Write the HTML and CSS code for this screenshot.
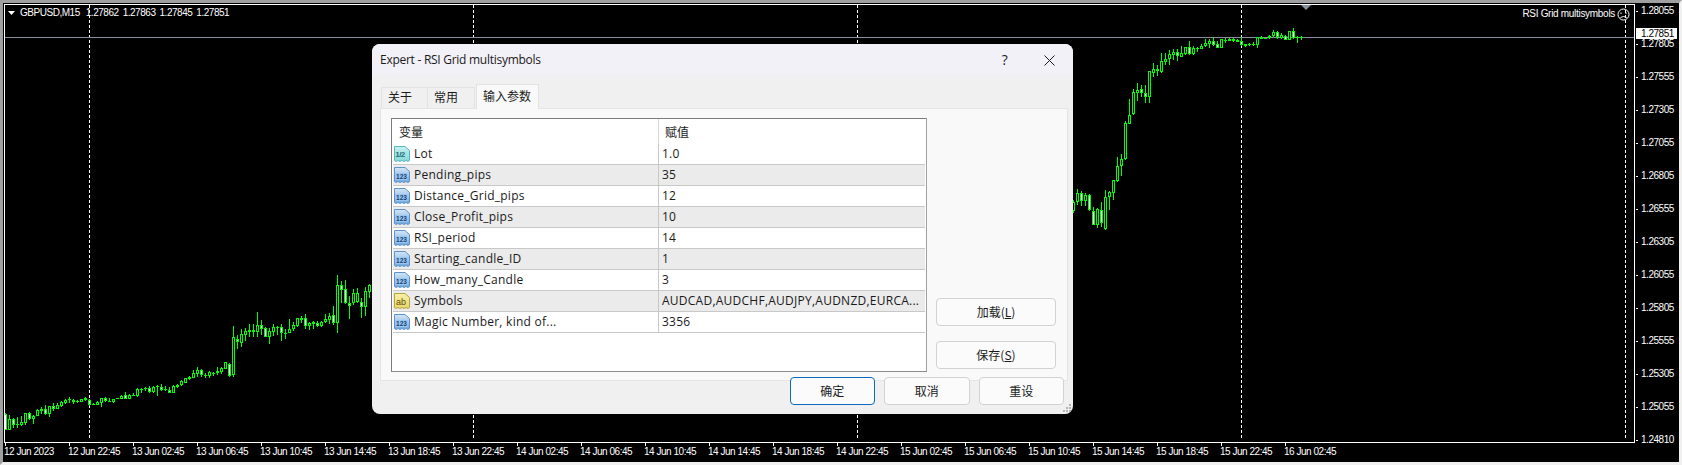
FILE: index.html
```html
<!DOCTYPE html>
<html lang="zh">
<head>
<meta charset="utf-8">
<title>GBPUSD,M15 - RSI Grid multisymbols</title>
<link rel="stylesheet" href="styles.css">
</head>
<body>
<svg class="defs" aria-hidden="true">
  <defs>
    <linearGradient id="gBlue" x1="0" y1="0" x2="0" y2="1"><stop offset="0" stop-color="#d4e6f8"/><stop offset="1" stop-color="#6ea6dc"/></linearGradient>
    <linearGradient id="gTeal" x1="0" y1="0" x2="0" y2="1"><stop offset="0" stop-color="#c8f0f0"/><stop offset="1" stop-color="#86d6d8"/></linearGradient>
    <linearGradient id="gYellow" x1="0" y1="0" x2="0" y2="1"><stop offset="0" stop-color="#f8f0a8"/><stop offset="1" stop-color="#e8d670"/></linearGradient>
    <symbol id="ico-int" viewBox="0 0 16 16">
      <path d="M.5 .5H11L15.5 4.5V14.5L14 15.5 12 14.5 10 15.5 8 14.5 6 15.5 4 14.5 2 15.5 .5 14.5Z" fill="url(#gBlue)" stroke="#5c93cc"/>
      <rect x="1.5" y="6" width="12" height="7" fill="#9cc6ee"/>
      <text x="7.5" y="12" class="ico-t ico-t-int">123</text>
    </symbol>
    <symbol id="ico-dbl" viewBox="0 0 16 16">
      <path d="M.5 .5H11L15.5 4.5V14.5L14 15.5 12 14.5 10 15.5 8 14.5 6 15.5 4 14.5 2 15.5 .5 14.5Z" fill="url(#gTeal)" stroke="#58b6bf"/>
      <text x="6" y="10.5" class="ico-t ico-t-dbl">1/2</text>
    </symbol>
    <symbol id="ico-str" viewBox="0 0 16 16">
      <path d="M.5 .5H11L15.5 4.5V14.5L14 15.5 12 14.5 10 15.5 8 14.5 6 15.5 4 14.5 2 15.5 .5 14.5Z" fill="url(#gYellow)" stroke="#b5a23c"/>
      <text x="7" y="12" class="ico-t ico-t-str">ab</text>
    </symbol>
  </defs>
</svg>

<main class="terminal">
  <section class="plot">
    <svg class="chart" viewBox="5 5 1629 437" aria-hidden="true">
      <path id="grid" class="grid" d=""/>
      <rect class="bid" x="5" y="37" width="1629" height="1"/>
      <path id="wicks" class="candle" d=""/>
      <path id="bear" class="bear" d=""/>
      <path id="bull" class="bull" d=""/>
      <path class="marker" d="M1301 5H1311L1306 10Z"/>
      <path class="menu-arrow" d="M8 11H15L11.5 15Z"/>
    </svg>
    <div class="legend">
      <span>GBPUSD,M15</span><span>1.27862</span><span>1.27863</span><span>1.27845</span><span>1.27851</span>
    </div>
    <div class="ea-name">
      <span>RSI Grid multisymbols</span>
      <svg class="smiley" viewBox="0 0 13 13" aria-hidden="true">
        <circle cx="6.5" cy="6.5" r="5.5"/>
        <path d="M4 4.5V6M9 4.5V6M3.5 9.5Q6.5 7.5 9.5 9.5"/>
      </svg>
    </div>
  </section>

  <aside class="prices">
    <div class="price">1.28055</div>
    <div class="price">1.27805</div>
    <div class="price">1.27555</div>
    <div class="price">1.27305</div>
    <div class="price">1.27055</div>
    <div class="price">1.26805</div>
    <div class="price">1.26555</div>
    <div class="price">1.26305</div>
    <div class="price">1.26055</div>
    <div class="price">1.25805</div>
    <div class="price">1.25555</div>
    <div class="price">1.25305</div>
    <div class="price">1.25055</div>
    <div class="price">1.24810</div>
    <div class="price-tag">1.27851</div>
  </aside>

  <footer class="times">
    <div class="time">12 Jun 2023</div>
    <div class="time">12 Jun 22:45</div>
    <div class="time">13 Jun 02:45</div>
    <div class="time">13 Jun 06:45</div>
    <div class="time">13 Jun 10:45</div>
    <div class="time">13 Jun 14:45</div>
    <div class="time">13 Jun 18:45</div>
    <div class="time">13 Jun 22:45</div>
    <div class="time">14 Jun 02:45</div>
    <div class="time">14 Jun 06:45</div>
    <div class="time">14 Jun 10:45</div>
    <div class="time">14 Jun 14:45</div>
    <div class="time">14 Jun 18:45</div>
    <div class="time">14 Jun 22:45</div>
    <div class="time">15 Jun 02:45</div>
    <div class="time">15 Jun 06:45</div>
    <div class="time">15 Jun 10:45</div>
    <div class="time">15 Jun 14:45</div>
    <div class="time">15 Jun 18:45</div>
    <div class="time">15 Jun 22:45</div>
    <div class="time">16 Jun 02:45</div>
  </footer>

  <div class="dialog" role="dialog">
    <header class="titlebar">
      <span class="title">Expert - RSI Grid multisymbols</span>
      <span class="help">?</span>
      <svg class="close" viewBox="0 0 11 11" aria-hidden="true"><path d="M.5 .5L10.5 10.5M10.5 .5L.5 10.5"/></svg>
    </header>
    <nav class="tabs">
      <div class="tab">关于</div>
      <div class="tab">常用</div>
      <div class="tab tab-active">输入参数</div>
    </nav>
    <div class="panel">
      <div class="params">
        <div class="params-head"><div class="head-var">变量</div><div class="head-val">赋值</div></div>
        <div class="row"><div class="cell-name"><svg class="ico"><use href="#ico-dbl"/></svg>Lot</div><div class="cell-val">1.0</div></div>
        <div class="row alt"><div class="cell-name"><svg class="ico"><use href="#ico-int"/></svg>Pending_pips</div><div class="cell-val">35</div></div>
        <div class="row"><div class="cell-name"><svg class="ico"><use href="#ico-int"/></svg>Distance_Grid_pips</div><div class="cell-val">12</div></div>
        <div class="row alt"><div class="cell-name"><svg class="ico"><use href="#ico-int"/></svg>Close_Profit_pips</div><div class="cell-val">10</div></div>
        <div class="row"><div class="cell-name"><svg class="ico"><use href="#ico-int"/></svg>RSI_period</div><div class="cell-val">14</div></div>
        <div class="row alt"><div class="cell-name"><svg class="ico"><use href="#ico-int"/></svg>Starting_candle_ID</div><div class="cell-val">1</div></div>
        <div class="row"><div class="cell-name"><svg class="ico"><use href="#ico-int"/></svg>How_many_Candle</div><div class="cell-val">3</div></div>
        <div class="row alt"><div class="cell-name"><svg class="ico"><use href="#ico-str"/></svg>Symbols</div><div class="cell-val">AUDCAD,AUDCHF,AUDJPY,AUDNZD,EURCA...</div></div>
        <div class="row"><div class="cell-name"><svg class="ico"><use href="#ico-int"/></svg>Magic Number, kind of...</div><div class="cell-val">3356</div></div>
      </div>
      <div class="side-buttons">
        <button class="btn btn-side">加载(<u>L</u>)</button>
        <button class="btn btn-side">保存(<u>S</u>)</button>
      </div>
    </div>
    <div class="actions">
      <button class="btn btn-main btn-default">确定</button>
      <button class="btn btn-main">取消</button>
      <button class="btn btn-main">重设</button>
    </div>
    <svg class="grip" viewBox="0 0 8 8" aria-hidden="true"><path d="M6 0h2v2H6zM3 3h2v2H3zM6 3h2v2H6zM0 6h2v2H0zM3 6h2v2H3zM6 6h2v2H6z"/></svg>
  </div>
</main>
<script src="chart.js"></script>
</body>
</html>
```

FILE: styles.css
```css
* { box-sizing: border-box; }
html, body { margin: 0; padding: 0; background: #000; }
.defs { position: absolute; width: 0; height: 0; }

.terminal {
  position: relative;
  width: 1682px;
  height: 465px;
  overflow: hidden;
  background: #000;
  color: #fff;
  border-style: solid;
  border-width: 3px;
  border-color: #a0a0a0 #f0f0f0 #f0f0f0 #a0a0a0;
  padding: 1px 0 0 1px;
  display: grid;
  grid-template-columns: 1631px 44px;
  grid-template-rows: 439px 19px;
  font: 10px/12px "Liberation Sans", Arial, sans-serif;
  letter-spacing: -.47px;
}

.plot {
  position: relative;
  border: 1px solid #fff;
}
.chart { display: block; width: 1629px; height: 437px; shape-rendering: crispEdges; }
.grid { fill: none; stroke: #fff; stroke-width: 1; stroke-dasharray: 3 2; }
.bid { fill: #87919b; }
.candle { fill: #00ff00; }
.bear { fill: #fff; }
.bull { fill: #000; }
.marker { fill: #87919b; shape-rendering: auto; }
.menu-arrow { fill: #fff; shape-rendering: auto; }

.legend {
  position: absolute;
  left: 15px;
  top: 2px;
  display: flex;
  gap: 4px;
  white-space: nowrap;
}
.legend span:first-child { margin-right: 2px; }
.ea-name {
  position: absolute;
  right: 4px;
  top: 2px;
  display: flex;
  align-items: center;
  gap: 2px;
  white-space: nowrap;
  letter-spacing: -.3px;
}
.smiley { width: 13px; height: 13px; margin-top: 1px; fill: none; stroke: #fff; stroke-width: 1; }

.prices {
  position: relative;
  display: flex;
  flex-direction: column;
  gap: 21px;
  padding-top: 1px;
}
.price { display: flex; align-items: center; gap: 3px; height: 12px; }
.price::before { content: ""; width: 2px; height: 1px; background: #fff; margin-left: 1px; }
.price-tag {
  position: absolute;
  left: 1px;
  top: 24px;
  width: 41px;
  height: 11px;
  background: #fff;
  color: #000;
  line-height: 11px;
  padding-left: 5px;
}

.times {
  grid-column: 1 / 3;
  display: flex;
  padding: 3px 0 0 0;
}
.time { position: relative; flex: 0 0 64px; white-space: nowrap; }
.time::before { content: ""; position: absolute; left: 1px; top: -3px; width: 1px; height: 3px; background: #fff; }

.dialog {
  position: absolute;
  left: 369px;
  top: 41px;
  width: 701px;
  height: 370px;
  background: #f0f0f0;
  border-radius: 8px;
  color: #1a1a1a;
  display: flex;
  flex-direction: column;
  overflow: hidden;
  font: 12px/16px "Open Sans", "Noto Sans CJK SC", sans-serif;
  letter-spacing: .25px;
}
.titlebar {
  flex: 0 0 31px;
  display: flex;
  align-items: center;
  background: #f3f1f8;
  padding: 1px 0 0 8px;
}
.title { flex: 1; letter-spacing: -.27px; }
.help { width: 16px; text-align: center; font-size: 14px; margin-right: 31px; }
.close { width: 11px; height: 11px; margin-right: 18px; fill: none; stroke: #1a1a1a; stroke-width: 1; }

.tabs {
  display: flex;
  align-items: flex-end;
  height: 24px;
  margin: 9px 0 0 9px;
  font-family: "Noto Sans CJK SC", sans-serif;
  letter-spacing: 0;
  position: relative;
  z-index: 1;
}
.tab {
  width: 47px;
  height: 21px;
  padding-left: 6px;
  line-height: 18px;
  background: #f0f0f0;
  border: 1px solid #e3e3e3;
  border-bottom: 0;
  border-left-width: 0;
}
.tab:first-child { border-left-width: 1px; }
.tab-active {
  width: 63px;
  height: 25px;
  line-height: 21px;
  background: #f9f9f9;
  border-left-width: 1px;
  margin-bottom: -1px;
  margin-left: 1px;
}

.panel {
  flex: 0 0 273px;
  margin: 0 5px 0 8px;
  background: #f9f9f9;
  border: 1px solid #e5e5e5;
  padding: 9px 8px 8px 10px;
  display: flex;
  gap: 9px;
}
.params {
  width: 536px;
  height: 254px;
  background: #fff;
  border: 1px solid #828282;
  border-color: #7c7c7c #a0a0a0 #8c8c8c #7c7c7c;
  padding-left: 1px;
}
.params-head {
  display: grid;
  grid-template-columns: 265px 1fr;
  height: 25px;
  line-height: 25px;
  font-family: "Noto Sans CJK SC", sans-serif;
  letter-spacing: 0;
}
.head-var { padding-left: 6px; }
.head-val { border-left: 1px solid #d8d8d8; padding-left: 6px; }
.row {
  display: grid;
  grid-template-columns: 265px 1fr;
  height: 21px;
  width: 532px;
  border-bottom: 1px solid #c8c8c8;
  line-height: 20px;
}
.alt { background: #ebebeb; }
.cell-name {
  display: flex;
  align-items: center;
  gap: 4px;
  padding-left: 1px;
  white-space: nowrap;
}
.cell-val {
  border-left: 1px solid #c8c8c8;
  padding-left: 3px;
  white-space: nowrap;
  overflow: hidden;
}
.ico { flex: 0 0 16px; width: 16px; height: 16px; }
.ico-t { text-anchor: middle; font-family: "Liberation Sans", sans-serif; font-weight: 700; letter-spacing: 0; }
.ico-t-int { font-size: 6.5px; fill: #16427a; }
.ico-t-dbl { font-size: 8px; fill: #1f6f78; letter-spacing: -.5px; }
.ico-t-str { font-size: 9px; fill: #5c5000; font-weight: 400; }

.side-buttons {
  width: 120px;
  display: flex;
  flex-direction: column;
  justify-content: flex-end;
  gap: 15px;
  padding-bottom: 3px;
}
.btn {
  font: 12px/16px "Noto Sans CJK SC", sans-serif;
  color: #1a1a1a;
  background: #fbfbfb;
  border: 1px solid #d2d2d2;
  border-radius: 4px;
  padding: 0;
}
.btn-side { height: 28px; }
.actions {
  display: flex;
  justify-content: flex-end;
  gap: 9.1px;
  margin-top: -4px;
  padding-right: 9px;
  position: relative;
}
.btn-main { width: 85.4px; height: 28px; }
.btn-default { border: 1.5px solid #0a69bd; }
.grip { position: absolute; right: 2px; bottom: 2px; width: 8px; height: 8px; fill: #b4b4b4; }
```

FILE: chart.js
```js
// Candles at 4px per bar: [wickTop, bodyTop, bodyBottom, wickBottom, bearish]
// Values are read in 3x crop units; `base` brings them back to page pixels.
var left = [
[488,492,540,540,1],[495,508,540,540,0],[505,508,525,535,1],[500,522,524,535,0],[498,516,526,528,0],
[488,490,518,525,0],[486,490,507,510,1],[494,497,507,522,0],[478,481,498,498,0],[472,478,484,492,0],
[465,478,492,495,1],[468,469,492,500,0],[460,469,477,484,1],[460,466,476,478,0],[453,457,468,470,0],
[447,449,459,462,0],[442,448,450,460,0],[447,449,455,461,1],[450,454,455,459,0],[447,448,455,456,0],
[441,443,451,452,0],[447,449,465,468,1],[460,462,464,465,0],[452,457,464,465,0],[443,445,458,470,0],
[441,444,453,457,1],[445,452,455,456,0],[447,448,456,460,0],[445,445,448,448,0],[436,437,447,448,0],
[427,436,446,447,1],[433,436,446,447,0],[430,435,436,437,0],[414,416,437,441,0],[414,416,417,430,0],
[411,414,418,424,1],[408,414,425,430,1],[408,412,426,428,0],[405,409,411,438,0],[403,412,420,424,1],
[409,418,421,422,0],[412,421,428,429,1],[404,409,428,429,0],[401,406,412,414,0],[391,394,405,408,0],
[384,385,398,400,0],[378,381,386,390,0],[360,369,383,384,0],[352,361,371,381,0],[357,361,376,380,1],
[370,375,378,384,0],[364,367,377,384,0],[367,368,370,378,0],[352,363,369,374,0],[350,355,365,372,0],
[336,337,357,358,0],[340,341,377,382,1],[228,262,374,380,0],[255,268,277,297,1],[238,253,278,290,0],
[235,244,255,273,0],[222,241,245,262,0],[222,241,246,262,0],[186,226,245,260,0],[210,226,236,255,1],
[230,235,260,262,1],[235,244,260,282,0],[223,232,245,258,0],[228,230,232,255,0],[222,232,248,272,1],
[238,248,249,266,0],[208,238,248,250,0],[216,226,238,244,0],[203,205,227,230,0],[198,205,209,220,0],
[193,205,227,236,1],[217,218,228,240,0],[213,217,221,238,0],[214,220,227,232,1],[214,215,228,232,0],
[193,208,215,220,0],[189,199,209,222,0],[168,196,218,224,1],[76,106,218,250,0],[94,106,119,160,1],
[90,118,160,162,1],[138,158,168,206,1],[116,130,160,165,0],[114,130,156,160,0],[145,155,170,205,1],
[112,124,170,198,0],[102,104,125,144,0]
];
var right = [
[600,606,634,640,0],[568,580,607,615,0],[572,580,604,618,1],[580,586,604,618,0],[582,586,630,632,1],
[622,632,674,674,1],[625,628,674,685,0],[606,630,668,680,1],[570,590,686,690,0],[573,577,592,630,0],
[541,541,578,600,0],[472,499,543,545,0],[462,478,497,527,0],[362,370,478,480,0],[296,344,371,372,0],
[268,277,343,345,0],[250,271,278,303,0],[255,268,278,290,1],[255,280,290,308,1],[213,214,290,308,0],
[190,208,218,232,0],[195,208,214,228,0],[158,184,215,218,0],[158,176,185,195,0],[150,163,177,195,0],
[148,157,165,180,0],[148,157,167,183,1],[138,160,170,172,0],[140,142,162,165,0],[124,142,162,165,1],
[138,145,162,165,0],[142,145,146,155,0],[133,139,146,148,0],[118,128,138,140,0],[116,122,132,144,0],
[112,124,134,138,1],[122,133,143,144,1],[116,118,143,144,0],[114,119,124,128,0],[115,118,123,124,0],
[114,118,124,126,0],[118,119,125,126,0],[112,124,135,138,1],[131,133,137,140,0],[130,131,136,138,0],
[127,131,135,138,0],[110,112,135,145,0],[108,112,116,117,0],[113,114,116,117,0],[106,107,114,116,0],
[90,96,108,110,0],[92,96,110,118,1],
[99,103.5,114,115.5,0],[105,106.5,120,120,1],[91.5,93,120,120,0],[84,93,114,115.5,1],[108,109.5,114,129,0],[106.5,111,114,120,0]
];

var wicks = "", bear = "", bull = "";
function box(x, y, w, h) { return "M" + x + " " + y + "h" + w + "v" + h + "h" + (-w) + "z"; }
function add(k, c, base) {
  var top = base + Math.round(c[0] / 3), bt = base + Math.round(c[1] / 3),
      bb = base + Math.round(c[2] / 3), low = base + Math.round(c[3] / 3);
  var col = 5 + 4 * k;
  wicks += box(col, top, 1, Math.max(low - top, 1));
  var h = Math.max(bb - bt, 1);
  wicks += box(col - 1, bt, 3, h);
  if (h > 2) {
    var inner = box(col, bt + 1, 1, h - 2);
    if (c[4]) { bear += inner; } else { bull += inner; }
  }
}
left.forEach(function (c, i) { add(i, c, 250); });
right.forEach(function (c, i) { add(267 + i, c, 0); });

var grid = "";
[89, 473, 857, 1241, 1625].forEach(function (x) { grid += "M" + (x + 0.5) + " 5V439"; });

document.getElementById("wicks").setAttribute("d", wicks);
document.getElementById("bear").setAttribute("d", bear);
document.getElementById("bull").setAttribute("d", bull);
document.getElementById("grid").setAttribute("d", grid);
```
